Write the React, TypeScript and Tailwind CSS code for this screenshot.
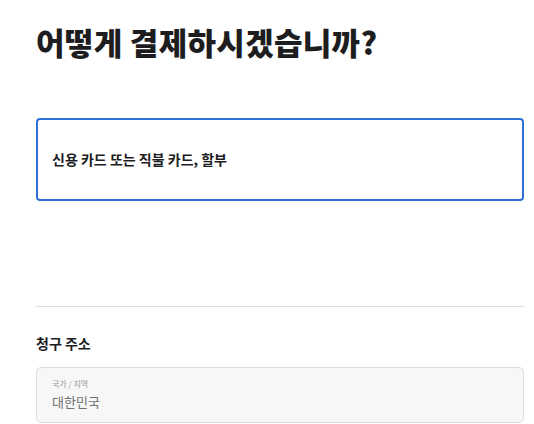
import React from 'react';

export default function App() {
  return (
    <div
      className="min-h-screen bg-white text-[#1d1d1f]"
      style={{ fontFamily: '"Noto Sans CJK KR", "Noto Sans", sans-serif' }}
    >
      <div className="w-[488px] ml-[36px] pt-[21px]">
        <h1 className="text-[31px] leading-[42px] font-black tracking-[0.3px]">어떻게 결제하시겠습니까?</h1>

        <div className="mt-[55px] h-[83px] rounded-[4px] border-2 border-[#2f6fd4] flex items-center px-[14px]">
          <span className="text-[14px] font-bold text-[#1d1d1f]">신용 카드 또는 직불 카드, 할부</span>
        </div>

        <div className="mt-[105px] border-t border-[#dddddd]" />

        <h2 className="mt-[26px] text-[14px] leading-[20px] font-bold">청구 주소</h2>

        <div className="mt-[14px] h-[56px] rounded-[5px] border border-[#dddddd] bg-[#f7f7f7] px-[15px] pt-[10px]">
          <div className="text-[8px] leading-[12px] text-[#9a9a9a]">국가 / 지역</div>
          <div className="mt-[2px] text-[13px] leading-[20px] text-[#707070]">대한민국</div>
        </div>
      </div>
    </div>
  );
}
